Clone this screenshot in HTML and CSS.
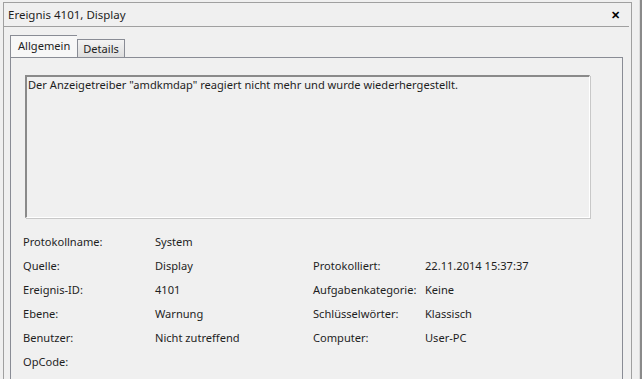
FILE: index.html
```html
<!DOCTYPE html>
<html lang="de">
<head>
    <meta charset="UTF-8">
    <title>Ereignis 4101, Display</title>
    <link rel="stylesheet" href="styles.css">
</head>
<body>
    <div class="window">
        <div class="titlebar">
            <span class="title">Ereignis 4101, Display</span>
            <span class="close">&#x2715;</span>
        </div>

        <div class="tabs">
            <div class="tab active">Allgemein</div>
            <div class="tab">Details</div>
        </div>

        <div class="panel">
            <div class="message">Der Anzeigetreiber "amdkmdap" reagiert nicht mehr und wurde wiederhergestellt.</div>

            <div class="fields">
                <div>Protokollname:</div><div>System</div><div></div><div></div>
                <div>Quelle:</div><div>Display</div><div>Protokolliert:</div><div>22.11.2014 15:37:37</div>
                <div>Ereignis-ID:</div><div>4101</div><div>Aufgabenkategorie:</div><div>Keine</div>
                <div>Ebene:</div><div>Warnung</div><div>Schlüsselwörter:</div><div>Klassisch</div>
                <div>Benutzer:</div><div>Nicht zutreffend</div><div>Computer:</div><div>User-PC</div>
                <div>OpCode:</div><div></div><div></div><div></div>
            </div>
        </div>
    </div>
    <div class="edge"></div>
</body>
</html>
```

FILE: styles.css
```css
body {
    margin: 0;
    width: 642px;
    height: 379px;
    overflow: hidden;
    background: #f0f0f0;
    font-family: "Noto Sans", Arial, sans-serif;
    font-size: 11.1px;
    color: #1e1e1e;
    display: flex;
    align-items: flex-start;
}

/* Dialog frame */
.window {
    margin: 2px 0 0 3px;
    width: 629px;
    height: 377px;
    border: 1px solid #a0a0a0;
    border-bottom: none;
    box-sizing: border-box;
    display: flex;
    flex-direction: column;
}

.titlebar {
    height: 23px;
    margin-right: 2px;
    padding: 0 9px 0 4px;
    border-bottom: 1px solid #a0a0a0;
    display: flex;
    align-items: center;
    justify-content: space-between;
    font-size: 11.5px;
}

.close {
    font-weight: bold;
    font-size: 11px;
    color: #000;
}

/* Tabs */
.tabs {
    display: flex;
    align-items: flex-end;
    margin: 8px 0 0 6px;
    height: 22px;
}

.tab {
    height: 17px;
    padding: 0 5px;
    border: 1px solid #898c95;
    border-bottom: none;
    background: linear-gradient(#f3f3f3, #dedede);
    line-height: 17px;
}

.tab.active {
    height: 21px;
    padding: 0 7px;
    background: #f7f7f7;
    line-height: 19px;
    border-right: none;
}

.panel {
    flex: 1;
    margin-left: 6px;
    width: 613px;
    border: 1px solid #898c95;
    border-bottom: none;
    padding-top: 17px;
    box-sizing: border-box;
}

/* Read-only description box */
.message {
    margin-left: 14px;
    width: 565px;
    height: 143px;
    box-sizing: border-box;
    border-top: 2px solid #8a8a8a;
    border-left: 2px solid #8a8a8a;
    border-bottom: 1px solid #fff;
    border-right: 1px solid #fff;
    box-shadow: 1px 1px 0 #c8c8c8;
    padding: 0 1px;
}

.fields {
    margin: 11px 0 0 12px;
    display: grid;
    grid-template-columns: 132px 158px 112px auto;
    grid-auto-rows: 24px;
    align-items: center;
}

.edge {
    margin-left: 7px;
    width: 3px;
    height: 379px;
    border-left: 1px solid #dcdcdc;
    border-right: 2px solid #8a8a8a;
    box-sizing: border-box;
}
```
